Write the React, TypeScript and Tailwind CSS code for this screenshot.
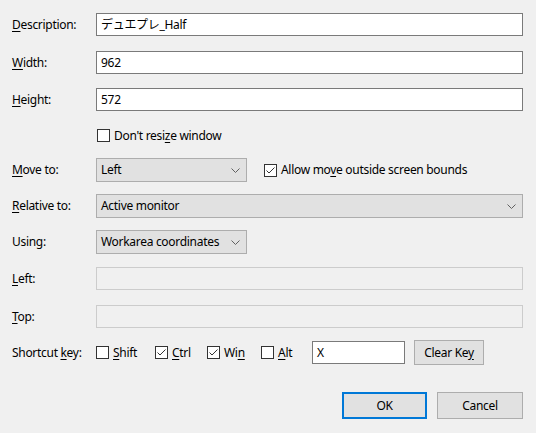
import React from "react";

const font = "font-['Segoe_UI','Noto_Sans','Noto_Sans_CJK_JP',sans-serif] tracking-[-0.3px]";

const Label = ({ pre = "", u, post }: { pre?: string; u: string; post: string }) => (
  <div className="w-[84px] shrink-0 text-[12px] text-black">
    {pre}
    <span className="underline underline-offset-2">{u}</span>
    {post}
  </div>
);

const TextBox = ({ value, className = "" }: { value: string; className?: string }) => (
  <div className={`h-[23px] border border-[#7a7a7a] bg-white pl-[4px] flex items-center text-[12px] text-black ${className}`}>
    {value}
  </div>
);

const Chevron = () => (
  <svg width="9" height="5" viewBox="0 0 9 5" className="shrink-0">
    <path d="M0.5 0.5 L4.5 4.5 L8.5 0.5" fill="none" stroke="#606060" strokeWidth="1" />
  </svg>
);

const Combo = ({ value, className = "" }: { value: string; className?: string }) => (
  <div className={`h-[24px] border border-[#adadad] bg-[#e1e1e1] pl-[4px] pr-[6px] flex items-center justify-between text-[12px] text-black ${className}`}>
    <span>{value}</span>
    <Chevron />
  </div>
);

const Check = ({ checked = false }: { checked?: boolean }) => (
  <div className="w-[13px] h-[13px] border border-[#333333] bg-white flex items-center justify-center shrink-0">
    {checked && (
      <svg width="11" height="11" viewBox="0 0 11 11">
        <path d="M1.5 5.5 L4 8 L9.5 2.5" fill="none" stroke="#333333" strokeWidth="1" />
      </svg>
    )}
  </div>
);

const CheckLabel = ({ checked, pre = "", u, post = "", className = "" }: { checked?: boolean; pre?: string; u: string; post?: string; className?: string }) => (
  <div className={`flex items-center gap-[4px] text-[12px] text-black ${className}`}>
    <Check checked={checked} />
    <span>
      {pre}
      <span className="underline underline-offset-2">{u}</span>
      {post}
    </span>
  </div>
);

const Button = ({ children, def = false, className = "" }: { children: React.ReactNode; def?: boolean; className?: string }) => (
  <div
    className={`flex items-center justify-center bg-[#e1e1e1] text-[12px] text-black ${
      def ? "border-2 border-[#0078d7]" : "border border-[#adadad]"
    } ${className}`}
  >
    {children}
  </div>
);

export default function App() {
  return (
    <div className={`w-[536px] h-[433px] bg-[#f0f0f0] pl-[12px] pr-[13px] pt-[13px] ${font}`}>
      <div className="flex items-center h-[23px]">
        <Label u="D" post="escription:" />
        <TextBox value="デュエプレ_Half" className="flex-1" />
      </div>

      <div className="flex items-center h-[23px] mt-[15px]">
        <Label u="W" post="idth:" />
        <TextBox value="962" className="flex-1" />
      </div>

      <div className="flex items-center h-[23px] mt-[14px]">
        <Label u="H" post="eight:" />
        <TextBox value="572" className="flex-1" />
      </div>

      <div className="flex items-center h-[13px] mt-[18px] pl-[85px]">
        <CheckLabel pre="Don't resi" u="z" post="e window" />
      </div>

      <div className="flex items-center h-[24px] mt-[16px]">
        <Label u="M" post="ove to:" />
        <Combo value="Left" className="w-[151px]" />
        <CheckLabel checked pre="Allow mo" u="v" post="e outside screen bounds" className="ml-[17px]" />
      </div>

      <div className="flex items-center h-[24px] mt-[12px]">
        <Label u="R" post="elative to:" />
        <Combo value="Active monitor" className="flex-1" />
      </div>

      <div className="flex items-center h-[24px] mt-[12px]">
        <div className="w-[84px] shrink-0 text-[12px] text-black">Using:</div>
        <Combo value="Workarea coordinates" className="w-[151px]" />
      </div>

      <div className="flex items-center h-[23px] mt-[13px]">
        <Label u="L" post="eft:" />
        <div className="flex-1 h-[23px] border border-[#cccccc] bg-[#f0f0f0]" />
      </div>

      <div className="flex items-center h-[23px] mt-[15px]">
        <Label u="T" post="op:" />
        <div className="flex-1 h-[23px] border border-[#cccccc] bg-[#f0f0f0]" />
      </div>

      <div className="flex items-center h-[25px] mt-[12px]">
        <Label pre="Shortcut " u="k" post="ey:" />
        <CheckLabel u="S" post="hift" className="w-[59px]" />
        <CheckLabel checked u="C" post="trl" className="w-[52px]" />
        <CheckLabel checked pre="Wi" u="n" className="w-[54px]" />
        <CheckLabel u="A" post="lt" className="w-[51px]" />
        <TextBox value="X" className="w-[93px]" />
        <Button className="w-[70px] h-[25px] ml-[9px]">
          <span>
            Clear Ke<span className="underline underline-offset-2">y</span>
          </span>
        </Button>
      </div>

      <div className="flex justify-end gap-[10px] mt-[27px]">
        <Button def className="w-[85px] h-[27px]">OK</Button>
        <Button className="w-[86px] h-[27px]">Cancel</Button>
      </div>
    </div>
  );
}
